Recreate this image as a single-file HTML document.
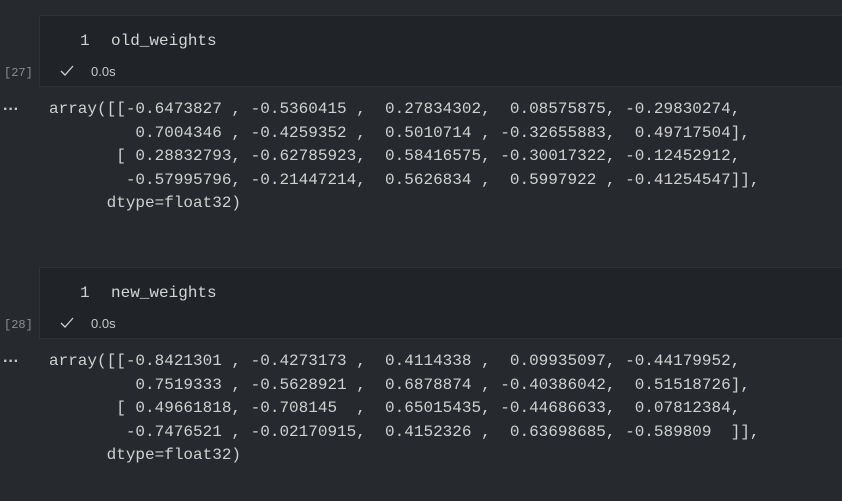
<!DOCTYPE html>
<html><head><style>
html,body{margin:0;padding:0;}
body{width:842px;height:501px;background:#262a2e;position:relative;overflow:hidden;font-family:"Liberation Sans",sans-serif;}
.cell{position:absolute;left:39px;right:-2px;height:70px;background:#202428;border:1px solid #2e3237;}
.code{position:absolute;font-family:"Liberation Mono",monospace;font-size:16px;color:#d4d4d4;white-space:pre;}
.ln{position:absolute;font-family:"Liberation Mono",monospace;font-size:16px;color:#cfcfcf;}
.ex{position:absolute;left:4px;font-family:"Liberation Mono",monospace;font-size:12px;color:#8a8d91;}
.t{position:absolute;font-size:13px;color:#c8c8c8;}
.chk{position:absolute;}
.dots{position:absolute;left:3px;color:#c8c8c8;font-size:16px;font-weight:bold;letter-spacing:0px;}
.out{position:absolute;left:49px;margin:0;font-family:"Liberation Mono",monospace;font-size:16px;line-height:23.5px;color:#d0d0d0;white-space:pre;}
</style></head><body>
<div class="cell" style="top:15px"></div>
<div class="ln" style="left:80px;top:32px">1</div>
<div class="code" style="left:111px;top:32px">old_weights</div>
<div class="ex" style="top:66px">[27]</div>
<svg class="chk" style="left:59px;top:64px" width="16" height="14" viewBox="0 0 16 14"><path d="M2 7 L6 11 L14 2" stroke="#cfcfcf" stroke-width="1.3" fill="none"/></svg>
<div class="t" style="left:91px;top:64px">0.0s</div>
<div class="dots" style="top:101px">···</div>
<pre class="out" style="top:98px">array([[-0.6473827 , -0.5360415 ,  0.27834302,  0.08575875, -0.29830274,
         0.7004346 , -0.4259352 ,  0.5010714 , -0.32655883,  0.49717504],
       [ 0.28832793, -0.62785923,  0.58416575, -0.30017322, -0.12452912,
        -0.57995796, -0.21447214,  0.5626834 ,  0.5997922 , -0.41254547]],
      dtype=float32)</pre>

<div class="cell" style="top:267px"></div>
<div class="ln" style="left:80px;top:284px">1</div>
<div class="code" style="left:111px;top:284px">new_weights</div>
<div class="ex" style="top:318px">[28]</div>
<svg class="chk" style="left:59px;top:316px" width="16" height="14" viewBox="0 0 16 14"><path d="M2 7 L6 11 L14 2" stroke="#cfcfcf" stroke-width="1.3" fill="none"/></svg>
<div class="t" style="left:91px;top:316px">0.0s</div>
<div class="dots" style="top:353px">···</div>
<pre class="out" style="top:350px">array([[-0.8421301 , -0.4273173 ,  0.4114338 ,  0.09935097, -0.44179952,
         0.7519333 , -0.5628921 ,  0.6878874 , -0.40386042,  0.51518726],
       [ 0.49661818, -0.708145  ,  0.65015435, -0.44686633,  0.07812384,
        -0.7476521 , -0.02170915,  0.4152326 ,  0.63698685, -0.589809  ]],
      dtype=float32)</pre>
</body></html>
